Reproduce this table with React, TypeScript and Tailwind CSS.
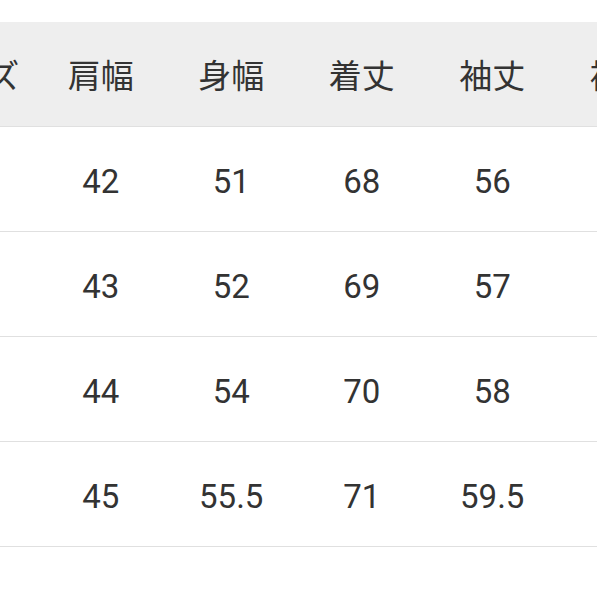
import React from "react";

const headers = ["サイズ", "肩幅", "身幅", "着丈", "袖丈", "裄丈"];
const rows = [
  ["S", "42", "51", "68", "56", "78"],
  ["M", "43", "52", "69", "57", "79"],
  ["L", "44", "54", "70", "58", "80"],
  ["XL", "45", "55.5", "71", "59.5", "82"],
];

export default function App() {
  return (
    <div className="w-[597px] h-[597px] bg-white overflow-hidden relative">
      <div className="pt-[22px] -ml-[95px] w-[783px]">
        <div
          className="grid grid-cols-[repeat(6,130.5px)] h-[105px] bg-[#eeeeee] border-b border-[#e0e0e0] items-center text-[#333333] text-[33px]"
          style={{ fontFamily: '"Noto Sans CJK JP", "Noto Sans", sans-serif' }}
        >
          {headers.map((h) => (
            <div key={h} className="text-center whitespace-nowrap leading-none">
              {h}
            </div>
          ))}
        </div>
        {rows.map((r, i) => (
          <div
            key={i}
            className="grid grid-cols-[repeat(6,130.5px)] h-[105px] pt-[4px] border-b border-[#e0e0e0] items-center text-[#333333] text-[33px]"
            style={{ fontFamily: 'Roboto, "Noto Sans", sans-serif' }}
          >
            {r.map((c, j) => (
              <div key={j} className="text-center leading-none">
                {c}
              </div>
            ))}
          </div>
        ))}
      </div>
    </div>
  );
}
